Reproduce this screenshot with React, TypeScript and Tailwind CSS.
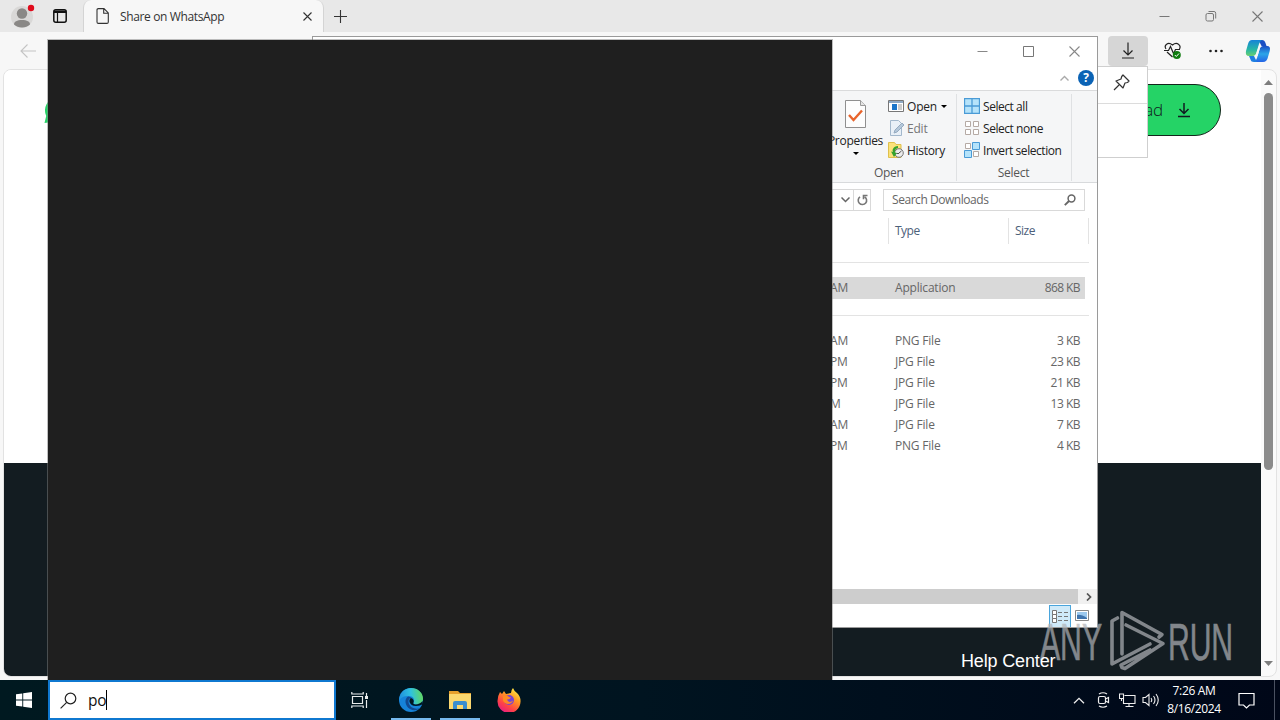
import React from "react";

type FileRow = {
  id: number;
  time: string;
  type: string;
  size: string;
};

const files: FileRow[] = [
  { id: 1, time: "AM", type: "PNG File", size: "3 KB" },
  { id: 2, time: "PM", type: "JPG File", size: "23 KB" },
  { id: 3, time: "PM", type: "JPG File", size: "21 KB" },
  { id: 4, time: "M", type: "JPG File", size: "13 KB" },
  { id: 5, time: "AM", type: "JPG File", size: "7 KB" },
  { id: 6, time: "PM", type: "PNG File", size: "4 KB" },
];

const TabBar = () => (
  <div className="flex h-8 items-stretch bg-[#e8e8e8]">
    <div className="flex w-[83px] items-center pl-[10px]">
      <svg width="26" height="26" viewBox="0 0 26 26">
        <circle cx="12" cy="14" r="11" fill="#d9d8d7" />
        <circle cx="12" cy="10.500" r="5.200" fill="#8a8886" />
        <path d="M4 21.500c0-3 3-4.500 8-4.500s8 1.500 8 4.500c-2 2-5 3-8 3s-6-1-8-3Z" fill="#8a8886" />
        <circle cx="21" cy="5" r="3.200" fill="#e00b1c" />
      </svg>
      <svg className="ml-[17px]" width="14" height="14" viewBox="0 0 14 14">
        <rect x="0.800" y="0.800" width="12.400" height="12.400" rx="2" fill="none" stroke="#111" strokeWidth="1.500" />
        <path d="M1.500 2h11v1.500h-11zM4.500 4v9" fill="#111" stroke="#111" strokeWidth="1.200" />
      </svg>
    </div>
    <div className="flex w-[241px] items-center rounded-t-lg border-x border-[#d4d4d4] bg-[#f7f7f7] pl-3">
      <svg width="13" height="16" viewBox="0 0 13 16" fill="none" stroke="#333" strokeWidth="1.100">
        <path d="M1 2q0-1.400 1.400-1.400H8l4.300 4.300V14q0 1.400-1.400 1.400H2.400Q1 15.400 1 14ZM7.700.7v4.500h4.500" />
      </svg>
      <span className="ml-[11px] flex-1 pt-px text-[12px] tracking-[-0.370px] text-[#333]">Share on WhatsApp</span>
      <svg className="mr-[10px]" width="11" height="11" viewBox="0 0 11 11" stroke="#333" strokeWidth="1.100">
        <path d="M1.500 1.500l8 8M9.500 1.500l-8 8" />
      </svg>
    </div>
    <div className="flex flex-1 items-center pl-[9px]">
      <svg width="15" height="15" viewBox="0 0 15 15" stroke="#333" strokeWidth="1.100">
        <path d="M7.500 1v13M1 7.500h13" />
      </svg>
    </div>
    <div className="flex items-center gap-[35px] pr-[17px]">
      <svg width="11" height="11" viewBox="0 0 11 11" stroke="#777">
        <path d="M0.500 5.500h10" />
      </svg>
      <svg width="12" height="12" viewBox="0 0 12 12" fill="none" stroke="#777">
        <rect x="1" y="3.500" width="7.500" height="7.500" rx="1.500" />
        <path d="M3.500 1.500H9q1.700 0 1.700 1.700V8.500" />
      </svg>
      <svg width="11" height="11" viewBox="0 0 11 11" stroke="#777" strokeWidth="1.100">
        <path d="M.5.5l10 10M10.500.5l-10 10" />
      </svg>
    </div>
  </div>
);

const ToolBar = () => (
  <div className="flex h-[37px] items-center bg-[#f7f7f7]">
    <svg className="ml-5" width="17" height="16" viewBox="0 0 17 16" fill="none" stroke="#c4c4c4" strokeWidth="1.100">
      <path d="M16 8H1M7.500 1.500L1 8l6.500 6.500" />
    </svg>
    <div className="ml-auto flex h-[30px] w-10 items-center justify-center rounded bg-[#d6d6d6]">
      <svg width="14" height="17" viewBox="0 0 14 17" fill="none" stroke="#222" strokeWidth="1.200">
        <path d="M7 .5v12M2.500 8.500L7 13l4.500-4.500M1 16h12" />
      </svg>
    </div>
    <svg className="ml-4" width="17" height="17" viewBox="0 0 17 17" fill="none">
      <path d="M2 7C-.5 3 4-.5 8.500 3 13-.5 17.500 3 15.500 7M3 10l5.500 5" stroke="#222" strokeWidth="1.200" />
      <path d="M0 8.500h4.500l2-4 3 7 2-4H16" stroke="#222" strokeWidth="1.200" />
      <circle cx="12.800" cy="13" r="4" fill="#107c10" />
      <path d="M10.800 13l1.500 1.500 2.700-3" stroke="#fff" />
    </svg>
    <svg className="ml-[27px]" width="16" height="4" viewBox="0 0 16 4" fill="#222">
      <circle cx="2.500" cy="2" r="1.300" />
      <circle cx="8" cy="2" r="1.300" />
      <circle cx="13.500" cy="2" r="1.300" />
    </svg>
    <svg className="mr-[9px] ml-[21px]" width="26" height="24" viewBox="0 0 26 24">
      <defs>
        <linearGradient id="copA" x1="0" y1="0" x2="0" y2="1">
          <stop offset="0" stopColor="#1683d8" />
          <stop offset="0.600" stopColor="#27b7a5" />
          <stop offset="1" stopColor="#6bcf70" />
        </linearGradient>
        <linearGradient id="copB" x1="0" y1="0" x2="0" y2="1">
          <stop offset="0" stopColor="#1b4fc4" />
          <stop offset="0.500" stopColor="#2ba5e8" />
          <stop offset="1" stopColor="#2464e6" />
        </linearGradient>
      </defs>
      <path d="M17 1q2.500 0 3.500 3l1 3h-5l-3-6Z" fill="#1b4fc4" />
      <path d="M7 1h10q-2 1-3 4l-3 10q-1 2-3 2H4q-4 0-3-5L3 5q1-4 4-4Z" fill="url(#copA)" />
      <path d="M18 7h4q4 0 2.700 5L23 18q-1 5-5 5H9q2-1 3-4l3-10q1-2 3-2Z" fill="url(#copB)" />
      <path d="M4 17h5l3 6H9q-3 0-3.500-2.500Z" fill="#1f7fe0" />
      <path d="M14 7h3q-1.500.5-2 2l-2.500 8H9q1.500-.5 2-2Z" fill="#f7f7f7" />
    </svg>
  </div>
);

const PageView = () => (
  <div className="mx-[3px] mb-[3px] flex min-h-0 flex-1 overflow-hidden rounded-lg border border-[#e2e2e2] bg-[#fafafa]">
    <div className="flex flex-1 flex-col bg-white">
      <div className="flex h-[393px] items-start justify-between pt-[14px] pr-10 pl-10">
        <svg className="mt-3" width="28" height="28" viewBox="0 0 28 28">
          <path d="M.5 27l1.700-7A13 13 0 1 1 8 26Z" fill="#25d366" />
        </svg>
        <div className="flex h-[52px] w-[150px] items-center justify-end rounded-full border border-[#12261b] bg-[#25d366] pr-[29px] text-[17px] text-[#111b21]">
          <span className="font-['Open_Sans',sans-serif] font-light">Download</span>
          <svg className="ml-[14px]" width="14" height="15" viewBox="0 0 14 15" fill="none" stroke="#111b21" strokeWidth="1.500">
            <path d="M7 0v10M2.500 6L7 10.500 11.500 6M1 13.500h12" />
          </svg>
        </div>
      </div>
      <div className="flex flex-1 items-end bg-[#131c21]">
        <span className="relative z-20 mb-[3px] ml-[957px] font-['Liberation_Sans',Arial,sans-serif] text-[18px] leading-6 tracking-[-0.150px] text-white">
          Help Center
        </span>
      </div>
    </div>
    <div className="flex w-[15px] flex-col items-center pt-[10px] pb-[10px]">
      <svg width="9" height="5" viewBox="0 0 9 5" fill="#7d7d7d">
        <path d="M4.500 0L9 5H0Z" />
      </svg>
      <div className="mt-[8px] h-[377px] w-[9px] rounded-full bg-[#8b8b8b]" />
      <svg className="mt-auto" width="9" height="5" viewBox="0 0 9 5" fill="#7d7d7d">
        <path d="M4.500 5L9 0H0Z" />
      </svg>
    </div>
  </div>
);

const DownloadsPopup = () => (
  <div className="absolute top-[66px] left-[1000px] h-[92px] w-[148px] border border-[#cfcfcf] bg-white">
    <div className="flex h-[37px] items-start justify-end border-b border-[#dcdcdc] pt-[7px] pr-[17px]">
      <svg width="17" height="17" viewBox="0 0 17 17" fill="none" stroke="#333" strokeWidth="1.200" strokeLinejoin="round">
        <path d="M10 1l6 6-1.500 1.500L12 9l-2 5L3 7l5-2 .7-2.500ZM6 11l-5 5" />
      </svg>
    </div>
  </div>
);

const Ribbon = () => (
  <div className="flex h-[92px] justify-end border-b border-[#d8dadc] bg-[#f5f6f7] pr-[25px] tracking-[-0.450px] text-[#222]">
    <div className="mt-[3px] flex h-[87px] w-[128px] flex-col border-r border-[#dfe1e3]">
      <div className="flex flex-1 pt-px">
        <div className="flex w-[53px] flex-col items-center pt-[5px]">
          <svg className="shrink-0" width="21" height="28" viewBox="0 0 21 28" fill="none">
            <path d="M.5.5h15l5 5v22H.5Z" fill="#fdfdfd" stroke="#8f8f8f" />
            <path d="M15.500.5v5h5" fill="#e4e4e4" stroke="#9a9a9a" />
            <path d="M4 15l4.500 5L17 10.500" stroke="#e8642c" strokeWidth="2.400" />
          </svg>
          <span className="mt-[5px] leading-4 tracking-[-0.300px]">Properties</span>
          <svg className="mt-[3px]" width="6" height="3" viewBox="0 0 6 3">
            <path d="M0 0h6L3 3Z" />
          </svg>
        </div>
        <div className="ml-[6px] flex flex-col">
          <div className="flex h-[22px] items-center">
            <svg width="16" height="12" viewBox="0 0 16 12">
              <path d="M.5.5h15v11H.5Z" fill="#fff" stroke="#777" />
              <path d="M1 1h14v2H1Z" fill="#8fa9c4" />
              <path d="M4 4h5v6H4Z" fill="#1b75c9" />
              <path d="M10 5h4M10 7h4M10 9h4" stroke="#999" />
            </svg>
            <span className="ml-[3px] pt-px tracking-[-0.200px]">Open</span>
            <svg className="ml-1" width="6" height="3" viewBox="0 0 6 3">
              <path d="M0 0h6L3 3Z" />
            </svg>
          </div>
          <div className="flex h-[22px] items-center text-[#777]">
            <svg width="16" height="16" viewBox="0 0 16 16">
              <path d="M2.500.5h8l3 3v12h-11Z" fill="#e9f0f7" stroke="#a3b8cc" />
              <path d="M6 13l1-3 7-7 2 2-7 7Z" fill="#b5c8da" stroke="#96abc0" />
            </svg>
            <span className="ml-[3px] pt-px tracking-[-0.200px]">Edit</span>
          </div>
          <div className="flex h-[22px] items-center">
            <svg width="16" height="16" viewBox="0 0 16 16" fill="none">
              <path d="M.5.5h6l1.500 2h5v13H.5Z" fill="#fbe27a" stroke="#dfc04d" />
              <circle cx="11" cy="11" r="4.300" fill="#ececec" stroke="#777" />
              <path d="M11 11l2.500-2M8.500 11.500H11" stroke="#555" />
              <path d="M10 4C5 4.500 4 8 5 10L3 9.500 6 15l3-4-2-.5C6.500 8 8 6.500 10 6Z" fill="#35a22e" />
            </svg>
            <span className="ml-[3px] pt-px tracking-[-0.300px]">History</span>
          </div>
        </div>
      </div>
      <span className="pl-[45px] leading-4 tracking-[-0.300px] text-[#555]">Open</span>
    </div>
    <div className="mt-[3px] flex h-[87px] w-[115px] flex-col border-r border-[#dfe1e3]">
      <div className="flex flex-1 flex-col pt-px pl-[7px]">
        <div className="flex h-[22px] items-center">
          <svg width="16" height="16" viewBox="0 0 16 16">
            <path d="M.5.5h15v15H.5ZM8 0v16M0 8h16" fill="#b5e3fa" stroke="#4a9bd6" strokeWidth="1.300" />
          </svg>
          <span className="ml-[3px] pt-px">Select all</span>
        </div>
        <div className="flex h-[22px] items-center">
          <svg width="16" height="16" viewBox="0 0 16 16" fill="#fff" stroke="#b5aaa4">
            <path d="M1.500 1.500h5v5h-5ZM9.500 1.500h5v5h-5ZM1.500 9.500h5v5h-5ZM9.500 9.500h5v5h-5Z" />
          </svg>
          <span className="ml-[3px] pt-px">Select none</span>
        </div>
        <div className="flex h-[22px] items-center">
          <svg width="16" height="16" viewBox="0 0 16 16" fill="#fff" stroke="#b5aaa4">
            <path d="M1.500 1.500h5v5h-5ZM9.500 9.500h5v5h-5Z" />
            <path d="M8.500.5h7v7h-7ZM.5 8.500h7v7h-7Z" fill="#b5e3fa" stroke="#4a9bd6" />
          </svg>
          <span className="ml-[3px] pt-px whitespace-nowrap">Invert selection</span>
        </div>
      </div>
      <span className="pr-px text-center leading-4 tracking-[-0.300px] text-[#555]">Select</span>
    </div>
  </div>
);

const ExplorerWindow = () => (
  <div className="absolute top-[36px] left-[312px] flex h-[592px] w-[786px] flex-col border border-[#9a9a9a] bg-white text-[12px]">
    <div className="flex h-[29px] items-center justify-end gap-[35px] pr-[17px]">
      <svg width="11" height="11" viewBox="0 0 11 11" stroke="#888">
        <path d="M.5 5.500h10" />
      </svg>
      <svg width="11" height="11" viewBox="0 0 11 11" fill="none" stroke="#777">
        <path d="M.5.5h10v10H.5Z" />
      </svg>
      <svg width="11" height="11" viewBox="0 0 11 11" stroke="#888" strokeWidth="1.100">
        <path d="M.5.5l10 10M10.500.5l-10 10" />
      </svg>
    </div>
    <div className="flex h-[25px] items-center justify-end gap-[9px] border-b border-[#dadbdc] pr-[3px]">
      <svg width="9" height="6" viewBox="0 0 9 6" fill="none" stroke="#aaa" strokeWidth="1.400">
        <path d="M.5 5.500l4-4 4 4" />
      </svg>
      <span className="flex size-4 items-center justify-center rounded-full bg-[#0b63b5] text-[12px] font-bold text-white">?</span>
    </div>
    <Ribbon />
    <div className="flex h-[35px] items-center justify-end pr-3 pb-px">
      <div className="flex h-[22px] w-[420px] items-center justify-end border border-[#d9d9d9]">
        <svg className="mr-[3px]" width="9" height="6" viewBox="0 0 9 6" fill="none" stroke="#666" strokeWidth="1.500">
          <path d="M.5.5l4 4 4-4" />
        </svg>
        <div className="flex h-full w-[17px] items-center justify-center border-l border-[#d9d9d9]">
          <svg width="11" height="12" viewBox="0 0 11 12" fill="none" stroke="#777" strokeWidth="1.600">
            <path d="M7.500 2.700A4.200 4.200 0 1 1 3 2.900" />
            <path d="M6.500 5.200V1.500h4" />
          </svg>
        </div>
      </div>
      <div className="ml-3 flex h-[22px] w-[202px] items-center justify-between border border-[#d9d9d9] pr-[8px] pl-2 text-[#666]">
        <span className="tracking-[-0.450px]">Search Downloads</span>
        <svg width="12" height="12" viewBox="0 0 12 12" fill="none" stroke="#666" strokeWidth="1.500">
          <circle cx="7.500" cy="4.500" r="3.400" />
          <path d="M5 7L.8 11.200" strokeWidth="1.900" />
        </svg>
      </div>
    </div>
    <div className="flex h-[26px] justify-end pr-2 text-[#4c607a]">
      <div className="flex w-[120px] items-center border-l border-[#e3e3e3] pl-[6px] tracking-[-0.500px]">Type</div>
      <div className="flex w-[81px] items-center border-x border-[#e3e3e3] pl-[6px] tracking-[-0.500px]">Size</div>
    </div>
    <div className="mt-[18px] mr-2 border-t border-[#e3e3e3]" />
    <div className="mt-[14px] mr-3 flex h-[22px] items-center justify-end bg-[#d9d9d9] text-[#666]">
      <span className="w-[65px]">AM</span>
      <span className="w-[120px]">Application</span>
      <span className="w-[70px] pr-[5px] text-right tracking-[-0.600px]">868 KB</span>
    </div>
    <div className="mt-[16px] mr-2 border-t border-[#e3e3e3]" />
    <div className="mt-[14px] mr-3 flex flex-col text-[#666]">
      {files.map((file) => (
        <div key={file.id} className="flex h-[21px] items-center justify-end">
          <span className="w-[65px]">{file.time}</span>
          <span className="w-[120px]">{file.type}</span>
          <span className="w-[70px] pr-[5px] text-right tracking-[-0.500px]">{file.size}</span>
        </div>
      ))}
    </div>
    <div className="mt-auto flex h-[15px] shrink-0 bg-[#cdcdcd]">
      <div className="ml-auto flex w-[19px] items-center justify-center bg-[#f0f0f0] pl-[2px]">
        <svg width="6" height="8" viewBox="0 0 6 8" fill="none" stroke="#555" strokeWidth="1.700">
          <path d="M1 .5L4.500 4 1 7.500" />
        </svg>
      </div>
    </div>
    <div className="flex h-[23px] shrink-0 items-center justify-end pr-2">
      <div className="mt-px flex h-[22px] w-[22px] items-center justify-center border border-b-0 border-[#4aa5dc] bg-[#cfeaf9]">
        <svg width="16" height="13" viewBox="0 0 16 13" fill="none" stroke="#777">
          <path d="M.5.5h4v4h-4ZM.5 4.500h4v4h-4ZM.5 8.500h4v4h-4Z" fill="#fff" />
          <path d="M6 2.500h4M12 2.500h4M6 6.500h4M12 6.500h4M6 10.500h4M12 10.500h4" />
        </svg>
      </div>
      <svg className="ml-1" width="14" height="11" viewBox="0 0 14 11">
        <path d="M.5.5h13v10H.5Z" fill="#fff" stroke="#888" />
        <path d="M2 2h10v7H2Z" fill="#9cc9ee" />
        <path d="M2 5q4-1 10 3v1H2Z" fill="#3f74ad" />
      </svg>
    </div>
  </div>
);

const TaskBar = () => (
  <div className="relative flex h-10 items-stretch bg-gradient-to-r from-[#001920] via-[#001420] to-[#000718]">
    <div className="flex w-12 items-center justify-center">
      <svg width="16" height="16" viewBox="0 0 16 16" fill="#fff">
        <path d="M0 2.300L6.300 1.400V7.500H0ZM7.200 1.200L16 0V7.500H7.200ZM0 8.500H6.300V14.600L0 13.700ZM7.200 8.500H16V16L7.200 14.800Z" />
      </svg>
    </div>
    <div className="flex w-[288px] items-center border-2 border-[#0f78d0] bg-white pl-[10px]">
      <svg width="17" height="17" viewBox="0 0 17 17" fill="none" stroke="#222" strokeWidth="1.200">
        <circle cx="10.500" cy="6.500" r="5.300" />
        <path d="M6.700 10.300L.6 16.400" />
      </svg>
      <span className="ml-[11px] text-[15.500px] leading-5 tracking-[-0.300px] text-[#111]">po</span>
      <span className="h-5 w-px bg-black" />
    </div>
    <div className="flex w-[48px] items-center justify-center">
      <svg width="18" height="16" viewBox="0 0 18 16" fill="none" stroke="#e8eced" strokeWidth="1.200">
        <path d="M1.500 4.500h10v7h-10ZM.8 0v2h11.400V0M.8 16v-2h11.400v2M15.500 1v3M15.500 8v8" />
        <path d="M14 4h3v3h-3Z" fill="#e8eced" stroke="none" />
      </svg>
    </div>
    <div className="ml-[7px] flex w-10 flex-col items-center justify-between pt-2">
      <svg width="24" height="24" viewBox="0 0 24 24">
        <defs>
          <linearGradient id="edgeTop" x1="0" y1="0.500" x2="1" y2="0.400">
            <stop offset="0" stopColor="#208fdd" />
            <stop offset="0.500" stopColor="#2fc2df" />
            <stop offset="1" stopColor="#63d95c" />
          </linearGradient>
        </defs>
        <circle cx="12" cy="12" r="12" fill="#1683d9" />
        <path d="M.3 10C1.500 3.500 6.500 0 12 0c7 0 12 5 12 10.500 0 4-3 6-6.500 6-2.500 0-3.500-1-3-2 1.500-2 .5-6.500-4.500-6.500C5 8 1 9 .3 14Z" fill="url(#edgeTop)" />
        <path d="M9.500 8.500C5 10 5.500 18 11 21c4 2.200 8 1 10.500-1-4 1.700-11 .5-12-6-.2-2 .5-4 3-4.500Z" fill="#114a92" />
        <path d="M12 10c-3 1.500-2 8 5 8 3 0 5-1 5.700-1.500L23 17l1 0-.5-4C21 17 13 17.500 14.500 14.500c.8-1.500 0-4-2.500-4.500Z" fill="#001722" />
      </svg>
      <div className="h-[2px] w-full bg-[#76b9ed]" />
    </div>
    <div className="ml-[9px] flex w-10 flex-col items-center justify-between pt-[11px]">
      <svg width="22" height="18" viewBox="0 0 22 18">
        <path d="M0 0h9l2 2h11v16H0Z" fill="#e6a02c" />
        <path d="M0 3h22v15H0Z" fill="#fbd86f" />
        <path d="M4 18v-6q0-2 2-2h10q2 0 2 2v6h-4v-4H8v4Z" fill="#3a8ed0" />
      </svg>
      <div className="h-[2px] w-full bg-[#76b9ed]" />
    </div>
    <div className="ml-[9px] flex w-10 items-center justify-center">
      <svg width="24" height="24" viewBox="0 0 24 24">
        <defs>
          <linearGradient id="fox" x1="0.800" y1="0" x2="0.200" y2="1">
            <stop offset="0" stopColor="#fff14a" />
            <stop offset="0.350" stopColor="#ff9a22" />
            <stop offset="0.700" stopColor="#ff4246" />
            <stop offset="1" stopColor="#e3188b" />
          </linearGradient>
        </defs>
        <path d="M3 4l2 2 2-3 2 3 5-1q0-3 2-5 1 3 4 5 4 4 3.500 9A11.500 11.500 0 0 1 .5 13Q.5 8 3 4Z" fill="url(#fox)" />
        <circle cx="12" cy="12" r="5" fill="#7644d6" />
        <path d="M6 8q4-2 6 1l2 .5q-1 2-4 2c1 3 4 3 6 1-1 4-8 5-10 0Z" fill="#ff8a22" />
      </svg>
    </div>
    <div className="ml-auto flex items-center">
      <svg width="12" height="7" viewBox="0 0 12 7" fill="none" stroke="#eee" strokeWidth="1.300">
        <path d="M1 6.300l5-5 5 5" />
      </svg>
      <svg className="ml-[12px]" width="13" height="16" viewBox="0 0 13 16" fill="none" stroke="#eee" strokeWidth="1.200">
        <rect x="1.500" y="4.500" width="7" height="7" rx="1.500" />
        <path d="M8.500 7l3-1.500v5l-3-1.500M2 2q4-2.500 8 0M2 14q4 2.500 8 0" />
      </svg>
      <svg className="ml-[9px]" width="17" height="15" viewBox="0 0 17 15" fill="none" stroke="#eee" strokeWidth="1.100">
        <path d="M5.500 2.500h10.500v8H4.500V6M10 10.500v3M6.500 13.500h8M.5 1h4v4.500h-4ZM2.500 5.500V8" />
      </svg>
      <svg className="ml-[6px]" width="17" height="14" viewBox="0 0 17 14" fill="none" stroke="#eee" strokeWidth="1.100">
        <path d="M1 4.500h2.500L7 1.500v11L3.500 9.500H1ZM9 5q1.500 2 0 4M11.500 3q3 4 0 8M14 1q4.500 6 0 12" />
      </svg>
      <div className="ml-[8px] flex w-[54px] flex-col items-center whitespace-nowrap text-[12px] leading-[18px] tracking-[-0.350px] text-white">
        <span>7:26 AM</span>
        <span>8/16/2024</span>
      </div>
      <svg className="ml-[17px]" width="17" height="17" viewBox="0 0 17 17" fill="none" stroke="#fff" strokeWidth="1.200">
        <path d="M1 1.500h15v11.500h-4.500L8.500 16l-3-3H1Z" />
      </svg>
      <div className="ml-[19px] h-10 w-[6px] border-l border-[#4a5161]" />
    </div>
  </div>
);

const Watermark = () => (
  <svg
    className="absolute top-[604px] left-[1036px] z-10 overflow-visible font-['Liberation_Sans',Arial,sans-serif] opacity-70"
    width="200"
    height="72"
    viewBox="-2 -4 200 72"
    fill="#b1b4b8"
  >
    <g stroke="#b1b4b8" strokeWidth="0.600">
      <text x="2" y="51.500" fontSize="52" textLength="62" lengthAdjust="spacingAndGlyphs">ANY</text>
      <text x="130" y="51.500" fontSize="52" textLength="65" lengthAdjust="spacingAndGlyphs">RUN</text>
    </g>
    <path
      d="M79.500 10L74 13V56L112 36M84 46V4.500L124 26.500L121 29M88 17L125 35.500L87 60.500L84 59.500L83 57L112 42"
      fill="none"
      stroke="#b1b4b8"
      strokeWidth="3.600"
      strokeLinejoin="round"
      strokeLinecap="round"
    />
  </svg>
);

const App = () => {
  return (
    <div className="relative flex h-[720px] w-[1280px] flex-col overflow-hidden bg-[#f7f7f7] font-['Open_Sans','Noto_Sans',sans-serif] text-[12px] tracking-[-0.200px]">
      <div className="flex h-[680px] flex-col">
        <TabBar />
        <ToolBar />
        <PageView />
      </div>
      <DownloadsPopup />
      <ExplorerWindow />
      {/* search flyout, still blank while results load */}
      <div className="absolute top-[39px] left-[47px] h-[641px] w-[786px] border border-b-0 border-[#808080]/50 bg-[#1f1f1f] bg-clip-padding" />
      <TaskBar />
      <Watermark />
    </div>
  );
};

export default App;
